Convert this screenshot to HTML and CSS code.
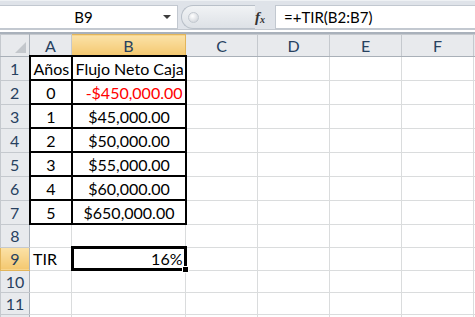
FILE: index.html
```html
<!DOCTYPE html>
<html lang="es">
<head>
    <meta charset="utf-8">
    <title>TIR - Hoja1</title>
    <link rel="stylesheet" href="styles.css">
</head>
<body>
    <div class="workbook">
        <div class="formula-bar">
            <div class="name-box">
                <span class="cell-ref">B9</span>
                <span class="caret"></span>
            </div>
            <div class="splitter"><span class="knob"></span></div>
            <div class="fx"><i>f</i><span>x</span></div>
            <div class="formula">=+TIR(B2:B7)</div>
        </div>
        <div class="bar-edge"></div>

        <table class="sheet">
            <colgroup>
                <col class="w-head">
                <col class="w-a">
                <col class="w-b">
                <col class="w-std">
                <col class="w-std">
                <col class="w-std">
                <col class="w-std">
                <col class="w-std">
            </colgroup>
            <tr class="col-heads">
                <th class="corner"><span class="tri"></span></th>
                <th>A</th>
                <th class="active">B</th>
                <th>C</th>
                <th>D</th>
                <th>E</th>
                <th>F</th>
                <th></th>
            </tr>
            <tr class="tall">
                <th>1</th>
                <td class="box center">Años</td>
                <td class="box">Flujo Neto Caja</td>
                <td></td><td></td><td></td><td></td><td></td>
            </tr>
            <tr class="tall">
                <th>2</th>
                <td class="box center">0</td>
                <td class="box right negative">-$450,000.00</td>
                <td></td><td></td><td></td><td></td><td></td>
            </tr>
            <tr class="tall">
                <th>3</th>
                <td class="box center">1</td>
                <td class="box center">$45,000.00</td>
                <td></td><td></td><td></td><td></td><td></td>
            </tr>
            <tr class="tall">
                <th>4</th>
                <td class="box center">2</td>
                <td class="box center">$50,000.00</td>
                <td></td><td></td><td></td><td></td><td></td>
            </tr>
            <tr class="tall">
                <th>5</th>
                <td class="box center">3</td>
                <td class="box center">$55,000.00</td>
                <td></td><td></td><td></td><td></td><td></td>
            </tr>
            <tr class="tall">
                <th>6</th>
                <td class="box center">4</td>
                <td class="box center">$60,000.00</td>
                <td></td><td></td><td></td><td></td><td></td>
            </tr>
            <tr class="tall">
                <th>7</th>
                <td class="box center">5</td>
                <td class="box center">$650,000.00</td>
                <td></td><td></td><td></td><td></td><td></td>
            </tr>
            <tr>
                <th>8</th>
                <td></td><td></td><td></td><td></td><td></td><td></td><td></td>
            </tr>
            <tr>
                <th class="active">9</th>
                <td>TIR</td>
                <td class="selected right">16%<span class="handle"></span></td>
                <td></td><td></td><td></td><td></td><td></td>
            </tr>
            <tr>
                <th>10</th>
                <td></td><td></td><td></td><td></td><td></td><td></td><td></td>
            </tr>
            <tr>
                <th>11</th>
                <td></td><td></td><td></td><td></td><td></td><td></td><td></td>
            </tr>
            <tr>
                <th></th>
                <td></td><td></td><td></td><td></td><td></td><td></td><td></td>
            </tr>
        </table>
    </div>
</body>
</html>
```

FILE: styles.css
```css
body {
    margin: 0;
    background: #ffffff;
    font-family: Lato, "Liberation Sans", sans-serif;
    overflow: hidden;
}

.workbook {
    width: 475px;
    height: 317px;
    overflow: hidden;
}

/* formula bar */
.formula-bar {
    display: flex;
    align-items: stretch;
    height: 24px;
    padding-top: 4px;
    background: #dfe3e9;
    border-top: 1px solid #eef1f4;
}

.name-box {
    width: 178px;
    flex: none;
    display: flex;
    align-items: center;
    background: #ffffff;
    border: 1px solid #c2c8d0;
    border-left: none;
    box-sizing: border-box;
}

.cell-ref {
    flex: 1;
    text-align: center;
    font-size: 15px;
    color: #000000;
    padding-left: 4px;
}

.caret {
    width: 0;
    height: 0;
    margin-right: 6px;
    border-left: 4px solid transparent;
    border-right: 4px solid transparent;
    border-top: 4px solid #3c3c3c;
}

.splitter {
    width: 74px;
    flex: none;
    margin-left: 3px;
    display: flex;
    align-items: center;
    background: linear-gradient(#f1f3f5, #dde1e6);
    border: 1px solid #b9c0c9;
    border-right: none;
    border-radius: 12px 0 0 12px;
    box-sizing: border-box;
}

.knob {
    width: 9px;
    height: 9px;
    margin-left: 6px;
    border-radius: 50%;
    background: radial-gradient(circle at 40% 35%, #ffffff, #c7ccd3);
    border: 1px solid #c3c9d0;
}

.fx {
    width: 20px;
    flex: none;
    display: flex;
    align-items: center;
    background: #dfe3e9;
    font-family: "Liberation Serif", serif;
    color: #333333;
}

.fx i {
    font-size: 15px;
    font-weight: bold;
}

.fx span {
    font-size: 10px;
    font-style: italic;
    font-weight: bold;
    margin-top: 5px;
}

.formula {
    flex: 1;
    display: flex;
    align-items: center;
    padding-left: 8px;
    background: #ffffff;
    border: 1px solid #c2c8d0;
    border-right: none;
    font-size: 15px;
    color: #000000;
}

.bar-edge {
    height: 2px;
    background: #ffffff;
    border-top: 1px solid #c4c9d0;
    border-bottom: 2px solid #a9b1bb;
}

/* grid */
.sheet {
    border-collapse: collapse;
    table-layout: fixed;
    width: 545px;
    font-size: 16px;
    color: #000000;
}

.w-head { width: 29px; }
.w-a { width: 42px; }
.w-b { width: 114px; }
.w-std { width: 72px; }

.sheet th {
    height: 20px;
    padding: 0;
    font-weight: normal;
    font-size: 16px;
    color: #27415f;
    text-align: center;
    background: #e8eaed;
    border: 1px solid #c5c9ce;
}

.sheet th.active {
    background: linear-gradient(#fbe2a8, #f4c870);
    border-color: #e2b55b;
}

.sheet tr th:first-child {
    border-right-color: #a9b0b8;
}

.col-heads th {
    border-bottom-color: #a9b0b8;
}

.corner {
    position: relative;
}

.tri {
    position: absolute;
    right: 3px;
    bottom: 3px;
    width: 0;
    height: 0;
    border-left: 11px solid transparent;
    border-bottom: 11px solid #c3c7cc;
}

.sheet td {
    height: 21px;
    padding: 0 2px 0 3px;
    white-space: nowrap;
    overflow: hidden;
    border: 1px solid #dadcdd;
}

.sheet tr.tall th,
.sheet tr.tall td {
    height: 22px;
}

.box {
    border: 2px solid #000000 !important;
}

.center { text-align: center; }
.right { text-align: right; }

.negative {
    color: #ff0000;
}

.sheet td.selected {
    position: relative;
    overflow: visible;
    border: 2px solid #000000;
    box-shadow: inset 0 0 0 1px #000000;
}

.handle {
    position: absolute;
    right: -4px;
    bottom: -4px;
    width: 5px;
    height: 5px;
    background: #000000;
    border: 1px solid #ffffff;
}
```
